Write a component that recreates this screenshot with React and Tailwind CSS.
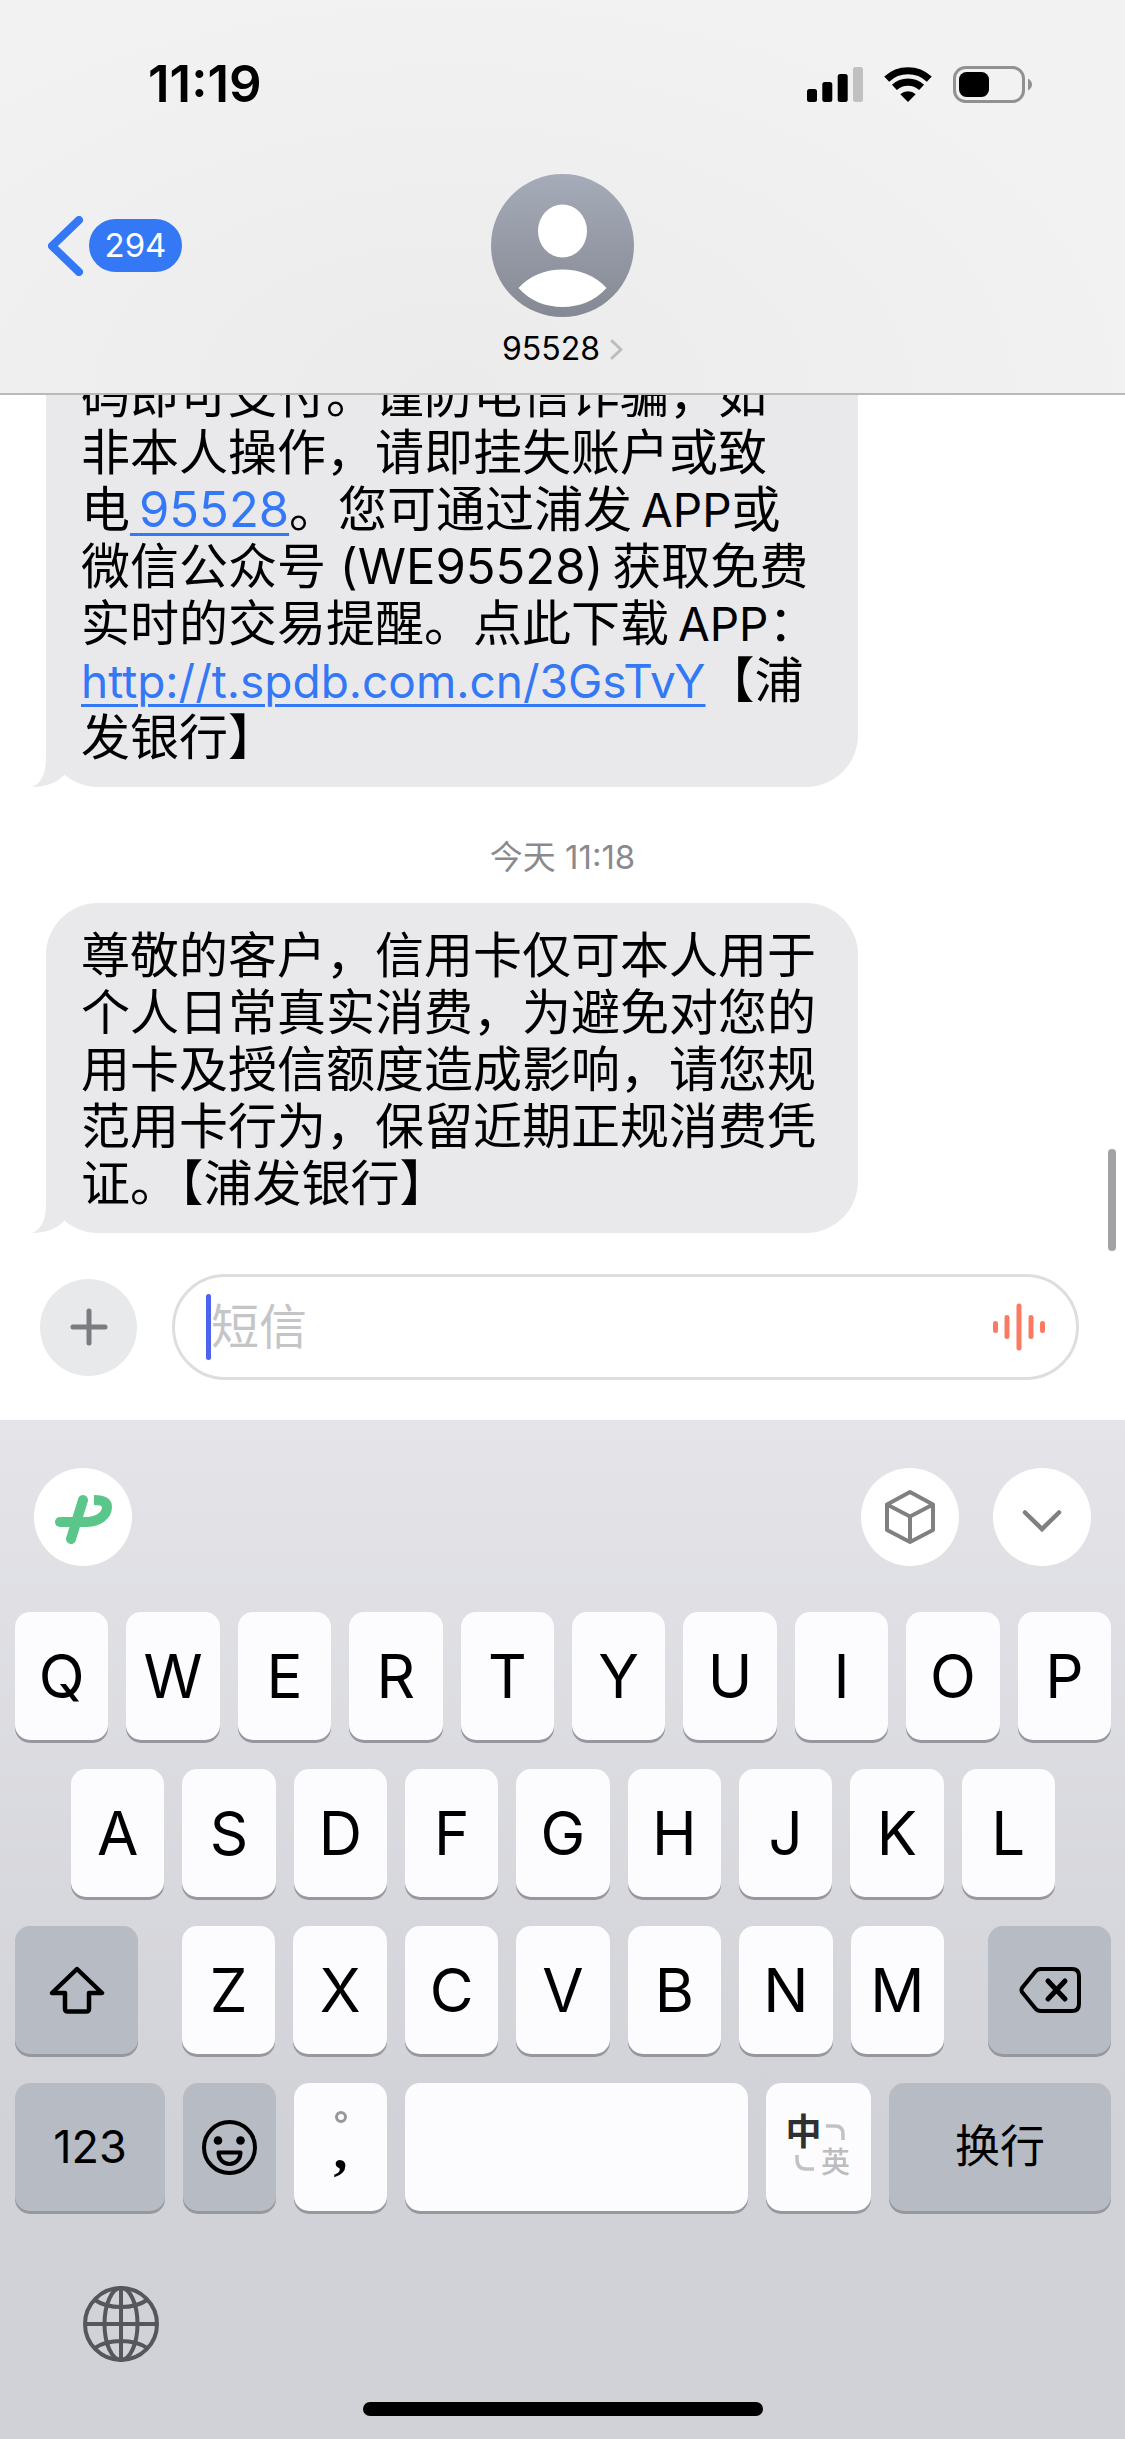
import clsx from 'clsx';

const THIN = '\u2009';

const previousMessage = [
  '码即可支付。谨防电信诈骗，如',
  '非本人操作，请即挂失账户或致',
  <>电<a href="tel:95528" className="text-[#3478f6] underline decoration-3 underline-offset-[6px]">{THIN}95528</a>。您可通过浦发{THIN}<span className="text-[46px]">APP</span>或</>,
  <>微信公众号 (WE95528){THIN}获取免费</>,
  <>实时的交易提醒。点此下载{THIN}<span className="text-[46px]">APP</span>：</>,
  <><a href="http://t.spdb.com.cn/3GsTvY" className="text-[46px] text-[#3478f6] underline decoration-3 underline-offset-[6px]">http://t.spdb.com.cn/3GsTvY</a>【浦</>,
  '发银行】',
];

const latestMessage = [
  '尊敬的客户，信用卡仅可本人用于',
  '个人日常真实消费，为避免对您的',
  '用卡及授信额度造成影响，请您规',
  '范用卡行为，保留近期正规消费凭',
  '证。【浦发银行】',
];

const SignalIcon = () => (
  <svg width="56" height="35" viewBox="0 0 56 35" aria-hidden="true">
    <rect x="0" y="22" width="10" height="13" rx="2.5" />
    <rect x="15.3" y="15" width="10" height="20" rx="2.5" />
    <rect x="30.7" y="7" width="10" height="28" rx="2.5" />
    <rect x="46" y="0" width="10" height="35" rx="2.5" fill="#c1c1c2" />
  </svg>
);

const WifiIcon = () => (
  <svg width="48" height="35" viewBox="0 0 48 35" fill="none" stroke="#000" strokeWidth="7.2" aria-hidden="true">
    <path d="M2.7 12.1A31.3 31.3 0 0 1 45.3 12.1" />
    <path d="M10.4 20.4A20 20 0 0 1 37.6 20.4" />
    <path d="M24 35L16.3 27.3A11.3 11.3 0 0 1 31.7 27.3Z" fill="#000" stroke="none" />
  </svg>
);

const BatteryIcon = () => (
  <svg width="80" height="37" viewBox="0 0 80 37" aria-hidden="true">
    <rect x="1.5" y="1.5" width="69" height="34" rx="11" fill="none" stroke="#919192" strokeWidth="3" />
    <rect x="6" y="6" width="30" height="25" rx="7.5" />
    <path d="M75 12.5Q79 15 79 18.5T75 24.5Z" fill="#919192" />
  </svg>
);

const Avatar = () => (
  <svg width="143" height="143" viewBox="0 0 143 143" aria-hidden="true">
    <defs>
      <linearGradient id="avatar" x1="0" y1="0" x2="0" y2="1">
        <stop offset="0" stopColor="#a6abb9" />
        <stop offset="1" stopColor="#858993" />
      </linearGradient>
    </defs>
    <circle cx="71.5" cy="71.5" r="71.5" fill="url(#avatar)" />
    <ellipse cx="71.5" cy="57" rx="24.5" ry="26.5" fill="#fff" />
    <path d="M27.5 114C39 101 55 95.5 71.5 95.5S104 101 115.5 114C104 127 88 133 71.5 133S39 127 27.5 114Z" fill="#fff" />
  </svg>
);

const Bubble = ({ lines }) => (
  <div className="relative ml-[46px] w-fit min-w-[812px] shrink-0 self-start rounded-[52px] bg-[#e9e9eb] pt-6 pr-7 pb-[21px] pl-[35px] text-[49px] leading-[57px] text-black">
    {lines.map((line, i) => (
      <p key={i} className="h-[57px] whitespace-nowrap">{line}</p>
    ))}
    <svg className="absolute bottom-0 -left-[14px]" width="32" height="50" viewBox="0 0 32 50" aria-hidden="true">
      <path d="M14 0V20C14 36 10 46 0 50C13 50 25 46 32 38V0Z" fill="#e9e9eb" />
    </svg>
  </div>
);

const Key = ({ children, label, className }) => (
  <button
    type="button"
    aria-label={label}
    className={clsx(
      'flex h-32 min-w-0 items-center justify-center rounded-[15px] text-black shadow-[0_3px_0_#97989d]',
      className
    )}
  >
    {children}
  </button>
);

const Letters = ({ letters }) =>
  letters.split('').map((letter) => (
    <Key key={letter} className="flex-1 bg-[#fcfcfe] text-[60px]">{letter}</Key>
  ));

const RoundButton = ({ label, children }) => (
  <button type="button" aria-label={label} className="size-[98px] rounded-full bg-white">
    <svg className="size-full" viewBox="0 0 98 98" fill="none" strokeLinecap="round" aria-hidden="true">
      {children}
    </svg>
  </button>
);

const Header = () => (
  <header className="shrink-0 border-b-2 border-[#b9b9ba] bg-[radial-gradient(ellipse_at_40%_100%,#ebebec,#f2f2f3_75%)] pb-3">
    {/* Status bar */}
    <div className="flex h-[168px] items-center justify-between pr-[92px] pl-[148px]">
      <span className="text-[51px] font-semibold">11:19</span>
      <div className="flex items-center gap-[21px]">
        <SignalIcon />
        <WifiIcon />
        <BatteryIcon />
      </div>
    </div>

    {/* Contact */}
    <div className="grid grid-cols-[1fr_auto_1fr] items-center pt-[6px]">
      <button type="button" aria-label="返回" className="flex items-center gap-[5px] justify-self-start pl-12">
        <svg width="36" height="60" viewBox="0 0 36 60" fill="none" stroke="#3478f6" strokeWidth="8" strokeLinecap="round" strokeLinejoin="round" aria-hidden="true">
          <path d="M31 4L4 30L31 56" />
        </svg>
        <span className="flex h-[53px] min-w-[93px] items-center justify-center rounded-full bg-[#3478f6] px-3 text-[33px] text-white">294</span>
      </button>
      <Avatar />
    </div>
    <button type="button" className="mx-auto flex h-16 items-center gap-[10px] text-[32px] text-black">
      <span>95528</span>
      <svg width="13" height="21" viewBox="0 0 13 21" fill="none" stroke="#bcbcbf" strokeWidth="3" strokeLinecap="round" strokeLinejoin="round" aria-hidden="true">
        <path d="M2 2L11 10.5L2 19" />
      </svg>
    </button>
  </header>
);

const waves = [
  { x: 2.5, h: 12 },
  { x: 14, h: 24 },
  { x: 26, h: 47 },
  { x: 38, h: 24 },
  { x: 49.5, h: 12 },
];

const Composer = () => (
  <form className="flex shrink-0 items-center gap-[35px] pt-[41px] pr-[46px] pb-10 pl-10">
    <button type="button" aria-label="添加" className="flex size-[97px] items-center justify-center rounded-full bg-[#e8e9eb]">
      <svg width="38" height="38" viewBox="0 0 38 38" stroke="#7b7c81" strokeWidth="5" strokeLinecap="round" aria-hidden="true">
        <path d="M19 3V35M3 19H35" />
      </svg>
    </button>
    <div className="flex h-[106px] min-w-0 flex-1 items-center rounded-full border-[3px] border-[#dedee0] px-[31px]">
      <span className="h-[66px] w-[5px] rounded-full bg-[#4b63ee]" />
      <input
        type="text"
        aria-label="短信"
        placeholder="短信"
        className="min-w-0 flex-1 bg-transparent text-[48px] text-black outline-none placeholder:text-[#c5c5c7]"
      />
      <button type="button" aria-label="语音输入">
        <svg width="52" height="48" viewBox="0 0 52 48" aria-hidden="true">
          {waves.map(({ x, h }) => (
            <rect key={x} x={x - 2.5} y={24 - h / 2} width="5" height={h} rx="2.5" fill="#fb7b62" />
          ))}
        </svg>
      </button>
    </div>
  </form>
);

const Keyboard = () => (
  <section aria-label="键盘" className="flex shrink-0 flex-col bg-linear-to-b from-[#e4e4e9] to-[#d1d2d7] to-70% pt-12 pb-[23px]">
    <div className="flex items-center gap-[34px] px-[34px]">
      <RoundButton label="输入法">
        <g stroke="#5bc689" strokeWidth="10" strokeLinejoin="round">
          <path d="M49 32L37 71" />
          <path d="M26 54H52C65 54 73 47 73 39C73 34 69 32 60 32" strokeLinecap="butt" />
          <path d="M26 54H50" />
        </g>
      </RoundButton>
      <div className="flex-1" />
      <RoundButton label="工具">
        <path d="M49 24L72 36.5V62L49 74L26 62V36.5ZM26 36.5L49 48.5L72 36.5M49 48.5V74" stroke="#808080" strokeWidth="4" strokeLinejoin="round" />
      </RoundButton>
      <RoundButton label="收起键盘">
        <path d="M32 44.5L49 61L66 44.5" stroke="#808080" strokeWidth="4.5" />
      </RoundButton>
    </div>

    <div className="mt-[46px] flex flex-col gap-[29px] pr-[14px] pl-[15px]">
      <div className="flex gap-[18px]">
        <Letters letters="QWERTYUIOP" />
      </div>
      <div className="flex gap-[18px] px-14">
        <Letters letters="ASDFGHJKL" />
      </div>
      <div className="flex gap-11">
        <Key label="切换大写" className="w-[123px] bg-[#b7bbc4]">
          <svg width="56" height="48" viewBox="0 0 56 48" fill="none" stroke="#000" strokeWidth="4.5" strokeLinejoin="round" aria-hidden="true">
            <path d="M28 3L53 27H40V43Q40 45.5 37 45.5H19Q16 45.5 16 43V27H3Z" />
          </svg>
        </Key>
        <div className="flex min-w-0 flex-1 gap-[18px]">
          <Letters letters="ZXCVBNM" />
        </div>
        <Key label="删除" className="w-[123px] bg-[#b7bbc4]">
          <svg width="62" height="46" viewBox="0 0 62 46" fill="none" stroke="#000" strokeWidth="4" strokeLinecap="round" strokeLinejoin="round" aria-hidden="true">
            <path d="M22 2H53Q60 2 60 9V37Q60 44 53 44H22Q18 44 16 41L3 25Q2 23 3 21L16 5Q18 2 22 2Z" />
            <path d="M29 14L46 32M46 14L29 32" strokeWidth="5" />
          </svg>
        </Key>
      </div>
      <div className="flex gap-[18px]">
        <Key className="w-[150px] bg-[#b7bbc4] text-[45px]">123</Key>
        <Key label="表情" className="w-[93px] bg-[#b7bbc4]">
          <svg width="55" height="55" viewBox="0 0 55 55" fill="none" stroke="#000" strokeWidth="4" strokeLinejoin="round" aria-hidden="true">
            <circle cx="27.5" cy="27.5" r="25.5" />
            <circle cx="16" cy="20.5" r="4.3" fill="#000" stroke="none" />
            <circle cx="38.5" cy="20.5" r="4.3" fill="#000" stroke="none" />
            <path d="M16.5 32.5H38.5C38.5 39 34 44 27.5 44S16.5 39 16.5 32.5Z" />
          </svg>
        </Key>
        <Key label="逗号" className="w-[93px] flex-col gap-[14px] bg-[#fcfcfe] pb-[22px]">
          <span className="size-3 rounded-full border-3 border-[#98989b]" />
          <span className="font-['Liberation_Serif',serif] text-[56px] leading-6 font-bold">,</span>
        </Key>
        <Key label="空格" className="flex-1 bg-[#fcfcfe]" />
        <Key label="中英切换" className="w-[105px] bg-[#fcfcfe]">
          <span className="grid grid-cols-[34px_30px] grid-rows-[32px_30px] place-items-center leading-none">
            <span className="text-[36px] leading-[32px] font-bold text-[#2f3032]">中</span>
            <svg width="20" height="16" viewBox="0 0 20 16" fill="none" stroke="#c2c2c4" strokeWidth="3.5" aria-hidden="true">
              <path d="M0 2H9Q17 2 17 10V16" />
            </svg>
            <svg width="20" height="16" viewBox="0 0 20 16" fill="none" stroke="#c2c2c4" strokeWidth="3.5" aria-hidden="true">
              <path d="M3 0V4Q3 14 12 14H20" />
            </svg>
            <span className="text-[29px] leading-[30px] font-medium text-[#bdbdbf]">英</span>
          </span>
        </Key>
        <Key className="w-[222px] bg-[#b7bbc4] text-[45px]">换行</Key>
      </div>
    </div>

    <button type="button" aria-label="切换键盘" className="mt-[75px] ml-[83px] size-[76px]">
      <svg className="size-full" viewBox="0 0 76 76" fill="none" stroke="#54575c" strokeWidth="4" aria-hidden="true">
        <circle cx="38" cy="38" r="36" />
        <ellipse cx="38" cy="38" rx="16.5" ry="36" />
        <path d="M38 2V74M2 38H74M12 14Q22 21 38 21T64 14M12 62Q22 55 38 55T64 62" />
      </svg>
    </button>
    <div className="mx-auto mt-10 h-[14px] w-[400px] rounded-full bg-black" />
  </section>
);

export default function App() {
  return (
    <div className="flex h-screen flex-col overflow-hidden bg-white font-['Inter','Noto_Sans_CJK_SC',sans-serif] text-black" lang="zh-CN">
      <Header />
      <div className="relative flex min-h-0 flex-1 flex-col">
        <main className="flex min-h-0 flex-1 flex-col justify-end overflow-hidden">
          <Bubble lines={previousMessage} />
          <p className="shrink-0 pt-[46px] pb-[22px] text-center text-[33px] leading-[48px] text-[#8a8a8e]">今天 11:18</p>
          <Bubble lines={latestMessage} />
        </main>
        {/* Scroll thumb */}
        <div className="absolute right-[9px] -bottom-[18px] h-[102px] w-2 rounded-full bg-[#a3a3a5]" />
      </div>
      <Composer />
      <Keyboard />
    </div>
  );
}
